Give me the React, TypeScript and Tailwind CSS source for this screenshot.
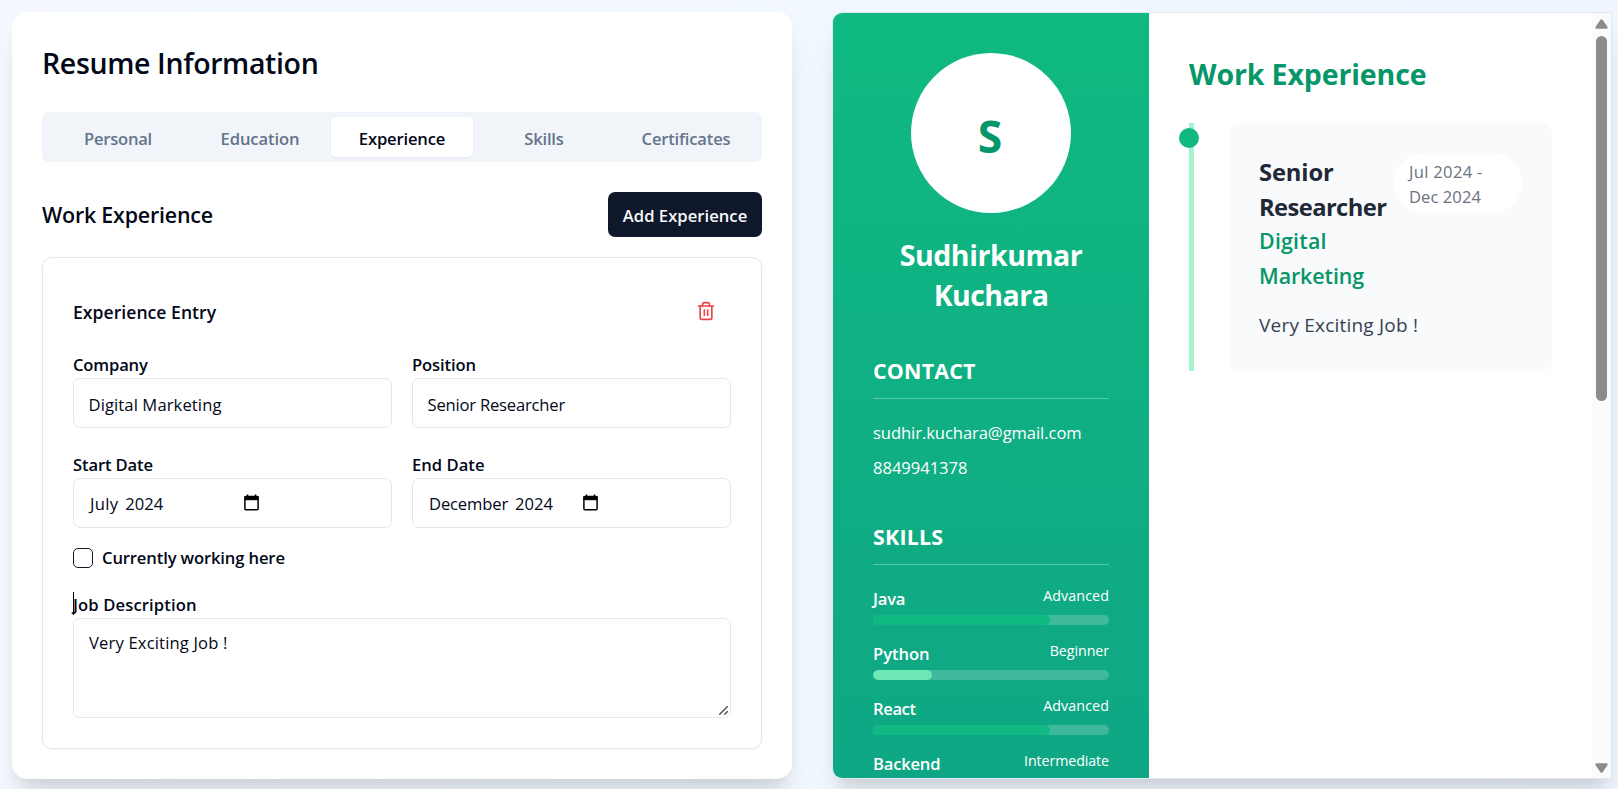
import React from 'react';
import { clsx } from 'clsx';

const tabs = [
  { label: 'Personal', tracking: 'tracking-[-0.27px]' },
  { label: 'Education', tracking: 'tracking-[-0.11px]' },
  { label: 'Experience', tracking: 'tracking-[-0.17px]' },
  { label: 'Skills', tracking: 'tracking-[-0.21px]' },
  { label: 'Certificates', tracking: 'tracking-[-0.19px]' },
];

const skills = [
  { name: 'Java', level: 'Advanced', percent: 75, fill: 'bg-[#10b981]', nameTracking: 'tracking-[-0.2px]', levelTracking: 'tracking-[0.1px]' },
  { name: 'Python', level: 'Beginner', percent: 25, fill: 'bg-[#6ee7b7]', nameTracking: 'tracking-[-0.07px]', levelTracking: 'tracking-[-0.07px]' },
  { name: 'React', level: 'Advanced', percent: 75, fill: 'bg-[#10b981]', nameTracking: 'tracking-[-0.39px]', levelTracking: 'tracking-[0.1px]' },
  { name: 'Backend', level: 'Intermediate', percent: 50, fill: 'bg-[#34d399]', nameTracking: 'tracking-[-0.2px]', levelTracking: 'tracking-[-0.1px]' },
];

function Label({ children, className }: { children: React.ReactNode; className?: string }) {
  return (
    <label className={clsx('block h-[23px] whitespace-nowrap text-[16.6px] leading-[19px] font-semibold', className)}>
      {children}
    </label>
  );
}

function TextField({ label, labelClass, value, valueClass }: { label: string; labelClass: string; value: string; valueClass: string }) {
  return (
    <div>
      <Label className={labelClass}>{label}</Label>
      <div className="flex h-[50px] items-center rounded-[7px] border border-[#e2e8f0] px-[14.5px] pt-[4px]">
        <span className={clsx('whitespace-nowrap text-[16.6px]', valueClass)}>{value}</span>
      </div>
    </div>
  );
}

function CalendarIcon() {
  return (
    <svg className="h-[17px] w-[15px]" viewBox="0 0 15 17" fill="none">
      <path d="M3.5 0.5V3M11.5 0.5V3" stroke="#000" strokeWidth="1.6" />
      <rect x="0.9" y="2.4" width="13.2" height="13.4" rx="1" stroke="#000" strokeWidth="1.5" />
      <rect x="0.5" y="2" width="14" height="4.2" fill="#000" />
    </svg>
  );
}

function MonthField({ label, labelClass, month, monthClass, year }: { label: string; labelClass: string; month: string; monthClass: string; year: string }) {
  return (
    <div>
      <Label className={labelClass}>{label}</Label>
      <div className="flex h-[50px] items-center rounded-[7px] border border-[#e2e8f0] px-4">
        <div className="flex w-[169px] items-center justify-between">
          <div className="flex gap-[7px] pt-[2px] text-[16.6px]">
            <span className={monthClass}>{month}</span>
            <span>{year}</span>
          </div>
          <CalendarIcon />
        </div>
      </div>
    </div>
  );
}

function TrashIcon() {
  return (
    <svg
      className="size-5 text-[#ef4444]"
      viewBox="0 0 24 24"
      fill="none"
      stroke="currentColor"
      strokeWidth="2"
      strokeLinecap="round"
      strokeLinejoin="round"
    >
      <path d="M3 6h18" />
      <path d="M19 6v14c0 1-1 2-2 2H7c-1 0-2-1-2-2V6" />
      <path d="M8 6V4c0-1 1-2 2-2h4c1 0 2 1 2 2v2" />
      <path d="M10 11v6M14 11v6" />
    </svg>
  );
}

function ResumeForm() {
  return (
    <section className="h-[767px] w-[780px] shrink-0 rounded-[15px] bg-white px-[30px] pt-[30px] text-[#020817] shadow-[0_25px_31px_-6px_rgba(0,0,0,0.1),0_10px_12.5px_-7.5px_rgba(0,0,0,0.1)]">
      <h1 className="h-[42px] text-[28.5px] leading-[42px] font-semibold tracking-[-0.36px]">Resume Information</h1>

      <div className="mt-[28px] grid h-[50px] grid-cols-5 rounded-[7px] bg-[#f1f5f9] p-[5px]">
        {tabs.map((tab) => (
          <button
            key={tab.label}
            className={clsx(
              'flex items-center justify-center rounded-[5px] pt-[5px] text-[16.6px] font-semibold',
              tab.tracking,
              tab.label === 'Experience' ? 'bg-white shadow-[0_1px_2px_rgba(0,0,0,0.06)]' : 'text-[#64748b]',
            )}
          >
            {tab.label}
          </button>
        ))}
      </div>

      <div className="mt-[30px] flex h-[45px] items-center justify-between">
        <h2 className="pt-[2px] text-[21.4px] font-semibold tracking-[-0.19px]">Work Experience</h2>
        <button className="flex h-[45px] w-[154px] items-center justify-center rounded-[7px] bg-[#0f172a] pt-[4px] text-[16.6px] font-semibold whitespace-nowrap tracking-[0.04px] text-[#f8fafc]">
          Add Experience
        </button>
      </div>

      <div className="mt-[20px] h-[492px] rounded-[10px] border border-[#e2e8f0] px-[30px] pt-[30px] shadow-[0_1px_2px_rgba(0,0,0,0.05)]">
        <div className="flex h-[45px] items-center justify-between pr-[15px]">
          <h3 className="pt-1 text-[17.6px] font-semibold tracking-[0.02px]">Experience Entry</h3>
          <TrashIcon />
        </div>

        <div className="mt-[22px] grid grid-cols-2 gap-x-[20px] gap-y-[27px]">
          <TextField label="Company" labelClass="tracking-[-0.17px]" value="Digital Marketing" valueClass="tracking-[0.1px]" />
          <TextField label="Position" labelClass="tracking-[-0.13px]" value="Senior Researcher" valueClass="tracking-[-0.2px]" />
          <MonthField label="Start Date" labelClass="tracking-[-0.14px]" month="July" monthClass="tracking-[0.3px]" year="2024" />
          <MonthField label="End Date" labelClass="tracking-[0.02px]" month="December" monthClass="tracking-[-0.15px]" year="2024" />
        </div>

        <div className="mt-[20px] flex h-[20px] items-center gap-[9px]">
          <div className="size-[20px] rounded-[5px] border border-[#0f172a]" />
          <span className="text-[16.6px] leading-[20px] font-semibold tracking-[-0.13px]">Currently working here</span>
        </div>

        <div className="relative mt-[27px]">
          <Label className="tracking-[0.12px]">Job Description</Label>
          <div className="absolute top-[-3px] left-0 h-[23px] w-px bg-black" />
          <div className="relative h-[100px] rounded-[7px] border border-[#e2e8f0] px-[15px] pt-[11px]">
            <p className="text-[16.6px] leading-[25px] tracking-[0.16px]">Very Exciting Job !</p>
            <svg className="absolute right-[2px] bottom-[2px] size-[9px]" viewBox="0 0 9 9" stroke="#4b4b4b" strokeWidth="1.4">
              <path d="M0.3 8.7L8.7 0.3M5.3 8.7L8.7 5.3" />
            </svg>
          </div>
        </div>
      </div>
    </section>
  );
}

function SectionTitle({ children, className }: { children: React.ReactNode; className?: string }) {
  return (
    <h3 className={clsx('h-[45px] border-b border-white/30 text-[21.4px] leading-[34px] font-bold', className)}>{children}</h3>
  );
}

function Sidebar() {
  return (
    <aside className="h-[1530px] w-[316px] shrink-0 bg-linear-to-b/srgb from-[#10b981] to-[#0d9488] px-[40px] pt-[40px] text-white">
      <div className="mx-auto flex size-[160px] items-center justify-center rounded-full bg-white pt-[6px] pr-[2px] text-[44.5px] leading-none font-bold text-[#059669]">
        S
      </div>
      <h2 className="mt-[22px] text-center text-[28.5px] leading-[40px] font-bold">
        <span className="block tracking-[-0.44px]">Sudhirkumar</span>
        <span className="block tracking-[-0.53px]">Kuchara</span>
      </h2>

      <SectionTitle className="mt-[39px] tracking-[0.2px]">CONTACT</SectionTitle>
      <div className="mt-[21px] flex flex-col gap-[10px] text-[16.6px] leading-[25px]">
        <p className="tracking-[-0.08px]">sudhir.kuchara@gmail.com</p>
        <p className="tracking-[-0.05px]">8849941378</p>
      </div>

      <SectionTitle className="mt-[40px] tracking-[0.2px]">SKILLS</SectionTitle>
      <div className="mt-[21px] flex flex-col gap-[16px]">
        {skills.map((skill) => (
          <div key={skill.name}>
            <div className="flex h-[25px] justify-between">
              <span className={clsx('text-[16.6px] leading-[25px] font-semibold', skill.nameTracking)}>{skill.name}</span>
              <span className={clsx('text-[14.25px] leading-[20px]', skill.levelTracking)}>{skill.level}</span>
            </div>
            <div className="mt-1 h-[10px] overflow-hidden rounded-full bg-white/20">
              <div className={clsx('h-full rounded-full', skill.fill)} style={{ width: `${skill.percent}%` }} />
            </div>
          </div>
        ))}
      </div>
    </aside>
  );
}

function Scrollbar() {
  return (
    <div className="flex w-[19px] shrink-0 flex-col items-center bg-[#fbfbfb] pt-[6px] pb-[5px]">
      <svg className="h-[10px] w-[13px]" viewBox="0 0 13 10" fill="#8b8b8b">
        <path d="M5.4 0.8Q6.5 -0.4 7.6 0.8L12.4 7.8Q13 9.6 11.6 9.8H1.4Q0 9.6 0.6 7.8Z" />
      </svg>
      <div className="mt-[7px] h-[365px] w-[11px] rounded-full bg-[#8b8b8b]" />
      <svg className="mt-auto h-[10px] w-[13px]" viewBox="0 0 13 10" fill="#8b8b8b">
        <path d="M5.4 9.2Q6.5 10.4 7.6 9.2L12.4 2.2Q13 0.4 11.6 0.2H1.4Q0 0.4 0.6 2.2Z" />
      </svg>
    </div>
  );
}

function ResumePreview() {
  return (
    <section className="flex h-[767px] w-[780px] shrink-0 overflow-hidden rounded-l-[10px] border border-[#e2e8f0] bg-white shadow-[0_25px_31px_-6px_rgba(0,0,0,0.1),0_10px_12.5px_-7.5px_rgba(0,0,0,0.1)]">
      <Sidebar />
      <main className="grow px-[40px] pt-[41px]">
        <h2 className="text-[28.5px] leading-[40px] font-bold tracking-[-0.12px] text-[#059669]">Work Experience</h2>
        <div className="relative mt-[29px] border-l-[5px] border-[#a7f3d0] pl-[35px]">
          <div className="absolute top-[5px] left-[-15px] size-[20px] rounded-full bg-[#10b981]" />
          <article className="h-[248px] w-[323px] rounded-[10px] bg-[#f9fafb] px-[30px] pt-[30px]">
            <div className="flex items-start justify-between">
              <div>
                <h3 className="pt-[2px] text-[23.75px] leading-[35px] font-bold text-[#1f2937]">
                  <span className="block tracking-[-0.13px]">Senior</span>
                  <span className="block tracking-[-0.6px]">Researcher</span>
                </h3>
                <h4 className="-mt-[2px] text-[21.4px] leading-[35px] font-semibold text-[#059669]">
                  <span className="block tracking-[0.2px]">Digital</span>
                  <span className="block tracking-[-0.08px]">Marketing</span>
                </h4>
              </div>
              <div className="h-[60px] w-[128px] rounded-full bg-white px-[15px] pt-[6px] text-[16.6px] leading-[25px] text-[#6b7280]">
                <span className="block tracking-[0.3px]">Jul 2024 -</span>
                <span className="block tracking-[0.05px]">Dec 2024</span>
              </div>
            </div>
            <p className="mt-[16px] text-[19px] leading-[33px] tracking-[0.21px] text-[#374151]">Very Exciting Job !</p>
          </article>
        </div>
      </main>
      <Scrollbar />
    </section>
  );
}

export default function App() {
  return (
    <div className="flex h-[789px] w-full gap-[40px] overflow-hidden bg-linear-to-r/srgb from-[#f5f9ff] to-[#eff6ff] pt-[12px] pl-[12px] font-['Open_Sans',sans-serif]">
      <ResumeForm />
      <ResumePreview />
    </div>
  );
}
